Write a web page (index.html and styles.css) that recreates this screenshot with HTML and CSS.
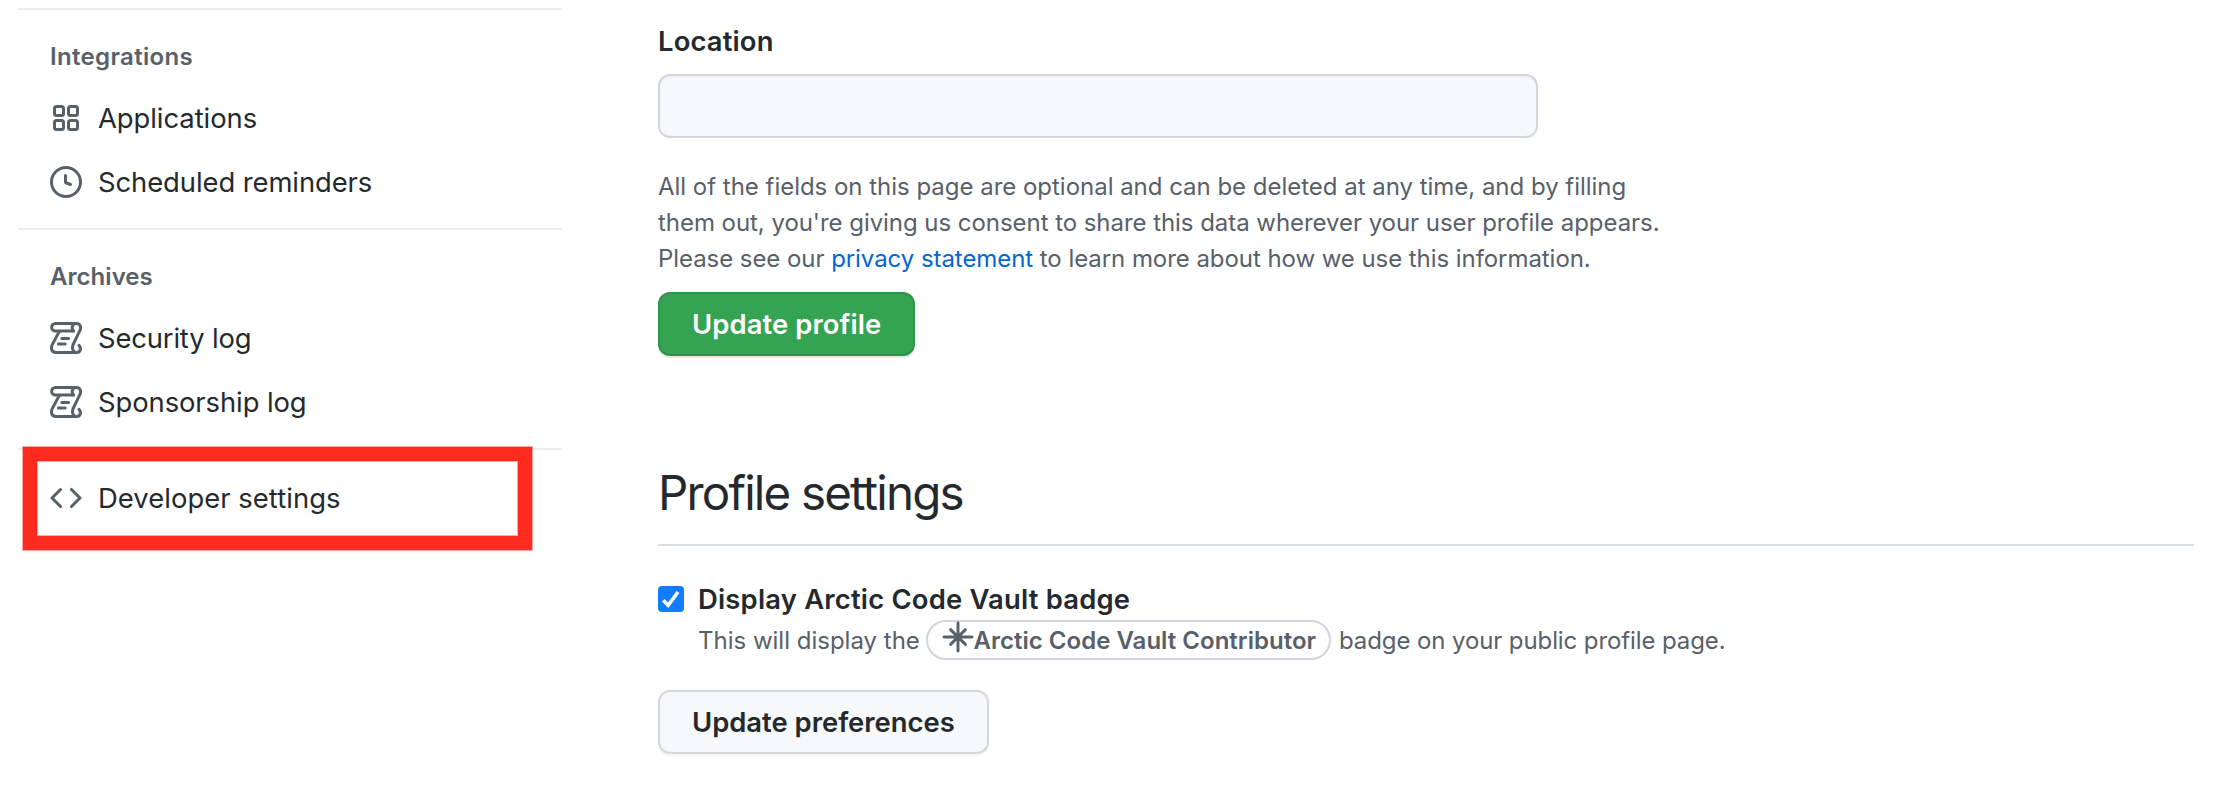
FILE: index.html
```html
<!DOCTYPE html>
<html lang="en">
<head>
<meta charset="utf-8">
<title>Profile settings</title>
<link rel="stylesheet" href="styles.css">
</head>
<body>
<svg class="defs" width="0" height="0">
  <symbol id="log" viewBox="0 0 16 16">
    <g fill="none" stroke="currentColor" stroke-width="1.5" stroke-linecap="round">
      <path d="M13.1.75H2.7a1.9 1.9 0 0 0 0 3.8H11.8"/>
      <path d="M11.8 4.5C10.4 3 11.2.75 13.1.75c2 0 2.7 1.8 1.8 3.6l-3.3 6.9c-.9 2 0 4 1.7 4 1.9 0 2.6-2.1 1.2-3.6"/>
      <path d="M4.6 4.8 1.2 11.2C.1 13.5 1 15.25 3 15.25h10.3M5.9 8.25h3.4M4.2 11h3.4"/>
    </g>
  </symbol>
</svg>
<div class="page">
  <nav class="sidebar">
    <section class="group">
      <h2 class="group-title integrations">Integrations</h2>
      <a class="item"><svg class="icon" viewBox="0 0 16 16"><g fill="none" stroke="currentColor" stroke-width="1.5"><rect x="2.25" y="2.25" width="4.5" height="4.5" rx="1"/><rect x="9.25" y="2.25" width="4.5" height="4.5" rx="1"/><rect x="2.25" y="9.25" width="4.5" height="4.5" rx="1"/><rect x="9.25" y="9.25" width="4.5" height="4.5" rx="1"/></g></svg><span class="applications">Applications</span></a>
      <a class="item"><svg class="icon" viewBox="0 0 16 16"><path fill="currentColor" fill-rule="evenodd" d="M1.5 8a6.5 6.5 0 1113 0 6.5 6.5 0 01-13 0zM8 0a8 8 0 100 16A8 8 0 008 0zm.5 4.75a.75.75 0 00-1.5 0v3.5a.75.75 0 00.471.696l2.5 1a.75.75 0 00.557-1.392L8.5 7.742V4.75z"/></svg><span class="reminders">Scheduled reminders</span></a>
    </section>
    <section class="group">
      <h2 class="group-title archives">Archives</h2>
      <a class="item"><svg class="icon"><use href="#log"/></svg><span class="security">Security log</span></a>
      <a class="item"><svg class="icon"><use href="#log"/></svg><span class="sponsorship">Sponsorship log</span></a>
    </section>
    <section class="group developer">
      <a class="item"><svg class="icon" viewBox="0 0 16 16"><path fill="currentColor" fill-rule="evenodd" d="M4.72 3.22a.75.75 0 011.06 1.06L2.06 8l3.72 3.72a.75.75 0 11-1.06 1.06L.47 8.53a.75.75 0 010-1.06l4.25-4.25zm6.56 0a.75.75 0 10-1.06 1.06L13.94 8l-3.72 3.72a.75.75 0 101.06 1.06l4.25-4.25a.75.75 0 000-1.06l-4.25-4.25z"/></svg><span class="dev-label">Developer settings</span></a>
      <div class="highlight"></div>
    </section>
  </nav>
  <main class="content">
    <label class="field-label" for="location">Location</label>
    <input class="field" id="location" type="text">
    <p class="note"><span class="n1">All of the fields on this page are optional and can be deleted at any time, and by filling</span><br><span class="n2">them out, you're giving us consent to share this data wherever your user profile appears.</span><br><span class="n3">Please see our <a class="link">privacy statement</a> to learn more about how we use this information.</span></p>
    <button class="btn primary">Update profile</button>
    <h1 class="heading">Profile settings</h1>
    <div class="option">
      <span class="checkbox"><svg viewBox="0 0 26 26"><path d="M5.2 14.2 10.2 19.2 20 6" fill="none" stroke="#fff" stroke-width="3.6"/></svg></span>
      <div class="option-text">
        <div class="option-label">Display Arctic Code Vault badge</div>
        <div class="option-desc"><span class="before">This will display the</span><span class="badge"><svg class="star" viewBox="0 0 32 32"><path d="M16 2v28M2 16h28M8.6 8.6l14.8 14.8M23.4 8.6 8.6 23.4" fill="none" stroke="currentColor" stroke-width="2.9" stroke-linecap="round"/></svg><span class="badge-text">Arctic Code Vault Contributor</span></span><span class="after">badge on your public profile page.</span></div>
      </div>
    </div>
    <button class="btn secondary">Update preferences</button>
  </main>
</div>
</body>
</html>
```
FILE: styles.css
```css
* { box-sizing: border-box; }
body { margin: 0; background: #fff; color: #24292e; font-family: Inter, "Liberation Sans", sans-serif; font-size: 27.4px; overflow: hidden; }
.defs { display: block; }
.page { display: flex; width: 2220px; height: 788px; }
.sidebar { width: 544px; margin-left: 18px; padding-top: 8px; flex: none; }
.group { height: 220px; border-top: 2px solid #eaecef; padding: 29px 0 0 32px; position: relative; }
.group-title { margin: 0 0 11px; font-size: 24px; line-height: 36px; height: 36px; font-weight: 600; color: #586069; }
.integrations { letter-spacing: .33px; }
.archives { letter-spacing: .05px; }
.item { display: flex; align-items: center; height: 64px; white-space: nowrap; }
.icon { width: 32px; height: 32px; margin-right: 16px; color: #586069; flex: none; }
.applications { letter-spacing: -.05px; }
.reminders { letter-spacing: -.07px; }
.security { letter-spacing: -.15px; }
.sponsorship { letter-spacing: -.08px; }
.dev-label { letter-spacing: .05px; }
.developer { padding-top: 16px; }
.highlight { position: absolute; left: 5px; top: -3px; width: 509px; height: 103px; border: 14px solid #ff2b1e; box-shadow: 0 0 0 1px rgba(255,43,30,.4), inset 0 0 0 1px rgba(255,43,30,.4); }
.content { margin-left: 96px; width: 1536px; padding-top: 20px; flex: none; white-space: nowrap; }
.field-label { display: block; height: 54px; line-height: 42px; font-weight: 600; letter-spacing: .15px; }
.field { display: block; width: 880px; height: 64px; border: 2px solid #d1d7de; border-radius: 12px; background: #f6f8fa; box-shadow: inset 0 2px 0 rgba(225,228,232,.3); }
.note { margin: 31px 0 0; font-size: 24px; line-height: 36px; color: #586069; }
.n1 { letter-spacing: -.02px; }
.n2 { letter-spacing: -.05px; }
.n3 { letter-spacing: -.06px; }
.link { color: #0366d6; }
.btn { display: block; height: 64px; padding: 0 32px; border: 2px solid #d5d8da; border-radius: 12px; background: #f6f8fa; box-shadow: 0 2px 0 rgba(27,31,35,.04); color: #24292e; font: 560 27.4px/40px Inter, sans-serif; letter-spacing: .1px; width: 331px; text-align: left; }
.primary { margin-top: 15px; width: 257px; background: #34a352; border-color: #2f934a; color: #fff; box-shadow: 0 2px 0 rgba(27,31,35,.1); }
.secondary { letter-spacing: 0; }
.heading { margin: 98px 0 0; height: 92px; border-bottom: 2px solid #d8dee2; font-size: 47.5px; font-weight: 400; line-height: 78px; letter-spacing: -1.83px; }
.option { display: flex; height: 144px; padding-top: 34px; }
.checkbox { width: 26px; height: 26px; margin-top: 6px; border-radius: 4px; background: #137bff; flex: none; }
.checkbox svg { display: block; }
.option-text { margin-left: 14px; }
.option-label { height: 40px; line-height: 38px; font-weight: 600; letter-spacing: .2px; }
.option-desc { display: flex; height: 40px; line-height: 42px; font-size: 24px; color: #586069; }
.before { width: 228px; }
.badge { display: flex; width: 405px; height: 40px; border: 2px solid #d1d5e0; border-radius: 20px; padding-left: 13.5px; line-height: 38px; font-weight: 600; }
.badge-text { letter-spacing: .02px; }
.star { width: 32px; height: 32px; margin-top: -1px; flex: none; }
.after { margin-left: 8px; letter-spacing: -.1px; }
```
